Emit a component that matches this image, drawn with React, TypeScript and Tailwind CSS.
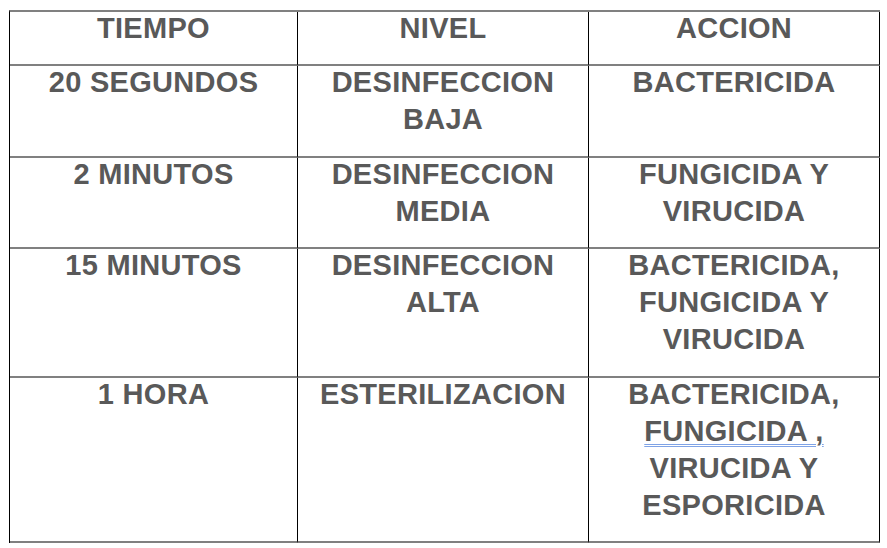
const rows: { tiempo: string; nivel: string[]; accion: React.ReactNode[] }[] = [
  { tiempo: "20 SEGUNDOS", nivel: ["DESINFECCION", "BAJA"], accion: ["BACTERICIDA"] },
  { tiempo: "2 MINUTOS", nivel: ["DESINFECCION", "MEDIA"], accion: ["FUNGICIDA Y", "VIRUCIDA"] },
  {
    tiempo: "15 MINUTOS",
    nivel: ["DESINFECCION", "ALTA"],
    accion: ["BACTERICIDA,", "FUNGICIDA Y", "VIRUCIDA"],
  },
  {
    tiempo: "1 HORA",
    nivel: ["ESTERILIZACION"],
    accion: [
      "BACTERICIDA,",
      <span
        key="f"
        className="underline decoration-double decoration-[#7fa3e6] decoration-1 underline-offset-[3px]"
      >
        FUNGICIDA ,
      </span>,
      "VIRUCIDA Y",
      "ESPORICIDA",
    ],
  },
]

function Cell({ lines }: { lines: React.ReactNode[] }) {
  return (
    <div className="border-b-2 border-r border-b-[#808080] border-r-black text-center">
      <div className="-mt-[2px]">
        {lines.map((l, i) => (
          <div key={i}>{l}</div>
        ))}
      </div>
    </div>
  )
}

export default function App() {
  return (
    <div className="h-[548px] w-[887px] bg-white pt-[10px] pl-[9px]">
      <div
        className="grid w-[871px] grid-cols-[288px_291px_291px] grid-rows-[54px_92px_91px_129px_165px] border-l border-t-2 border-l-black border-t-[#808080] text-[29px] font-bold leading-[37px] tracking-[0.3px] text-[#595959]"
        style={{ fontFamily: '"Liberation Sans", Arial, sans-serif' }}
      >
        <Cell lines={["TIEMPO"]} />
        <Cell lines={["NIVEL"]} />
        <Cell lines={["ACCION"]} />
        {rows.map((r) => (
          <>
            <Cell key={r.tiempo + "t"} lines={[r.tiempo]} />
            <Cell key={r.tiempo + "n"} lines={r.nivel} />
            <Cell key={r.tiempo + "a"} lines={r.accion} />
          </>
        ))}
      </div>
    </div>
  )
}
